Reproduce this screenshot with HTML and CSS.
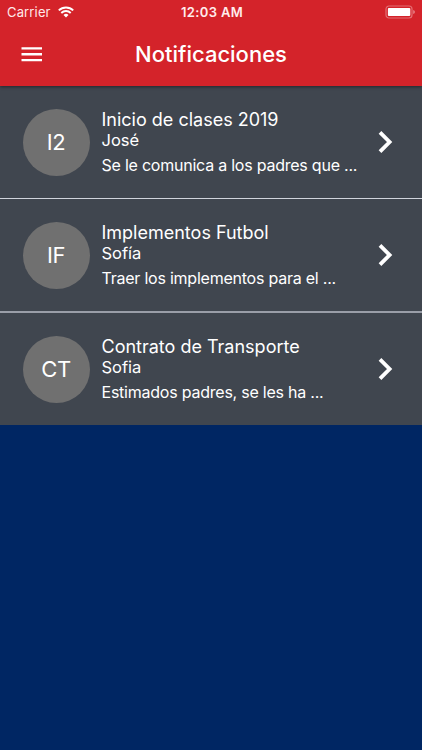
FILE: index.html
```html
<!DOCTYPE html>
<html lang="es">
<head>
<meta charset="utf-8">
<title>Notificaciones</title>
<link rel="stylesheet" href="styles.css">
</head>
<body>
<header class="header">
  <div class="status">
    <div class="carrier"><span class="carrier-name">Carrier</span>
      <svg class="wifi" width="16" height="12" viewBox="0 0 16 12" fill="none" stroke="#fff" stroke-width="1.9"><path d="M.8 4.4a10.3 10.3 0 0 1 14.4 0M3.3 7a6.7 6.7 0 0 1 9.4 0"/><path d="M8 11.5 5.5 9a3.6 3.6 0 0 1 5 0z" fill="#fff" stroke="none"/></svg>
    </div>
    <span class="time">12:03 AM</span>
    <svg class="battery" width="31" height="14" viewBox="0 0 31 14"><rect x="1" y="1" width="26" height="12" rx="3" fill="none" stroke="#fff" stroke-opacity=".35" stroke-width="1.2"/><rect x="2.9" y="2.9" width="22.4" height="8.2" rx="1" fill="#fff"/><path d="M28.3 5q1.5.6 1.5 2t-1.5 2z" fill="#fff" fill-opacity=".5"/></svg>
  </div>
  <div class="toolbar">
    <svg class="menu" width="21" height="15" viewBox="0 0 21 15" fill="#fff"><path d="M.5 .2H21v2.3H.5zM.5 6.1H21v2.3H.5zM.5 12H21v2.3H.5z"/></svg>
    <h1 class="title">Notificaciones</h1>
    <span></span>
  </div>
</header>
<main class="list">
  <article class="row">
    <div class="avatar">I2</div>
    <div class="content">
      <h2 class="subject">Inicio de clases 2019</h2>
      <p class="name">José</p>
      <p class="message">Se le comunica a los padres que ...</p>
    </div>
    <svg class="chevron" width="16" height="24" viewBox="0 0 16 24" fill="none" stroke="#fff" stroke-width="3.8"><path d="m2 2.4 9.6 9.6L2 21.6"/></svg>
  </article>
  <article class="row row-middle">
    <div class="avatar">IF</div>
    <div class="content">
      <h2 class="subject">Implementos Futbol</h2>
      <p class="name">Sofía</p>
      <p class="message">Traer los implementos para el ...</p>
    </div>
    <svg class="chevron" width="16" height="24" viewBox="0 0 16 24" fill="none" stroke="#fff" stroke-width="3.8"><path d="m2 2.4 9.6 9.6L2 21.6"/></svg>
  </article>
  <article class="row">
    <div class="avatar">CT</div>
    <div class="content">
      <h2 class="subject">Contrato de Transporte</h2>
      <p class="name">Sofia</p>
      <p class="message">Estimados padres, se les ha ...</p>
    </div>
    <svg class="chevron" width="16" height="24" viewBox="0 0 16 24" fill="none" stroke="#fff" stroke-width="3.8"><path d="m2 2.4 9.6 9.6L2 21.6"/></svg>
  </article>
</main>
</body>
</html>
```
FILE: styles.css
```css
* { box-sizing: border-box; }
body {
  margin: 0;
  min-height: 100vh;
  background: #002663;
  color: #fff;
  font-family: Inter, "Liberation Sans", sans-serif;
}
h1, h2, p { margin: 0; font-weight: 400; white-space: nowrap; }
.header {
  position: relative;
  height: 86px;
  background: #d4232a;
  box-shadow: 0 1px 3px rgba(0, 0, 0, .45);
}
.status {
  display: grid;
  grid-template-columns: 1fr auto 1fr;
  align-items: center;
  height: 24px;
  padding: 0 6px 0 7px;
}
.carrier { display: flex; align-items: center; gap: 7px; }
.carrier-name { font-size: 13px; letter-spacing: .15px; color: #ffe9e9; }
.time { padding-left: 1px; font-size: 13px; font-weight: 600; letter-spacing: .35px; color: #ffecec; }
.battery { justify-self: end; }
.toolbar {
  display: grid;
  grid-template-columns: 1fr auto 1fr;
  align-items: center;
  height: 60px;
  padding: 0 21px;
}
.title { font-size: 22px; line-height: 28px; font-weight: 500; }
.row {
  display: flex;
  align-items: center;
  height: 113px;
  padding: 0 28px 0 23px;
  background: #40464f;
  border-bottom: 1px solid #d0d4dc;
}
.row-middle { height: 114px; border-bottom: 2px solid #9a9ea8; }
.row:last-child { height: 112px; border-bottom: 0; }
.avatar {
  display: flex;
  align-items: center;
  justify-content: center;
  flex: none;
  width: 67px;
  height: 67px;
  padding-right: 1px;
  border-radius: 50%;
  background: #707070;
  font-size: 22px;
  letter-spacing: -.5px;
}
.content { flex: 1; margin-left: 11.5px; }
.subject { font-size: 18px; line-height: 22px; }
.name { font-size: 16.5px; line-height: 20px; margin-top: -1px; }
.message { margin-top: 5px; font-size: 16px; line-height: 20px; letter-spacing: -.23px; }
```
